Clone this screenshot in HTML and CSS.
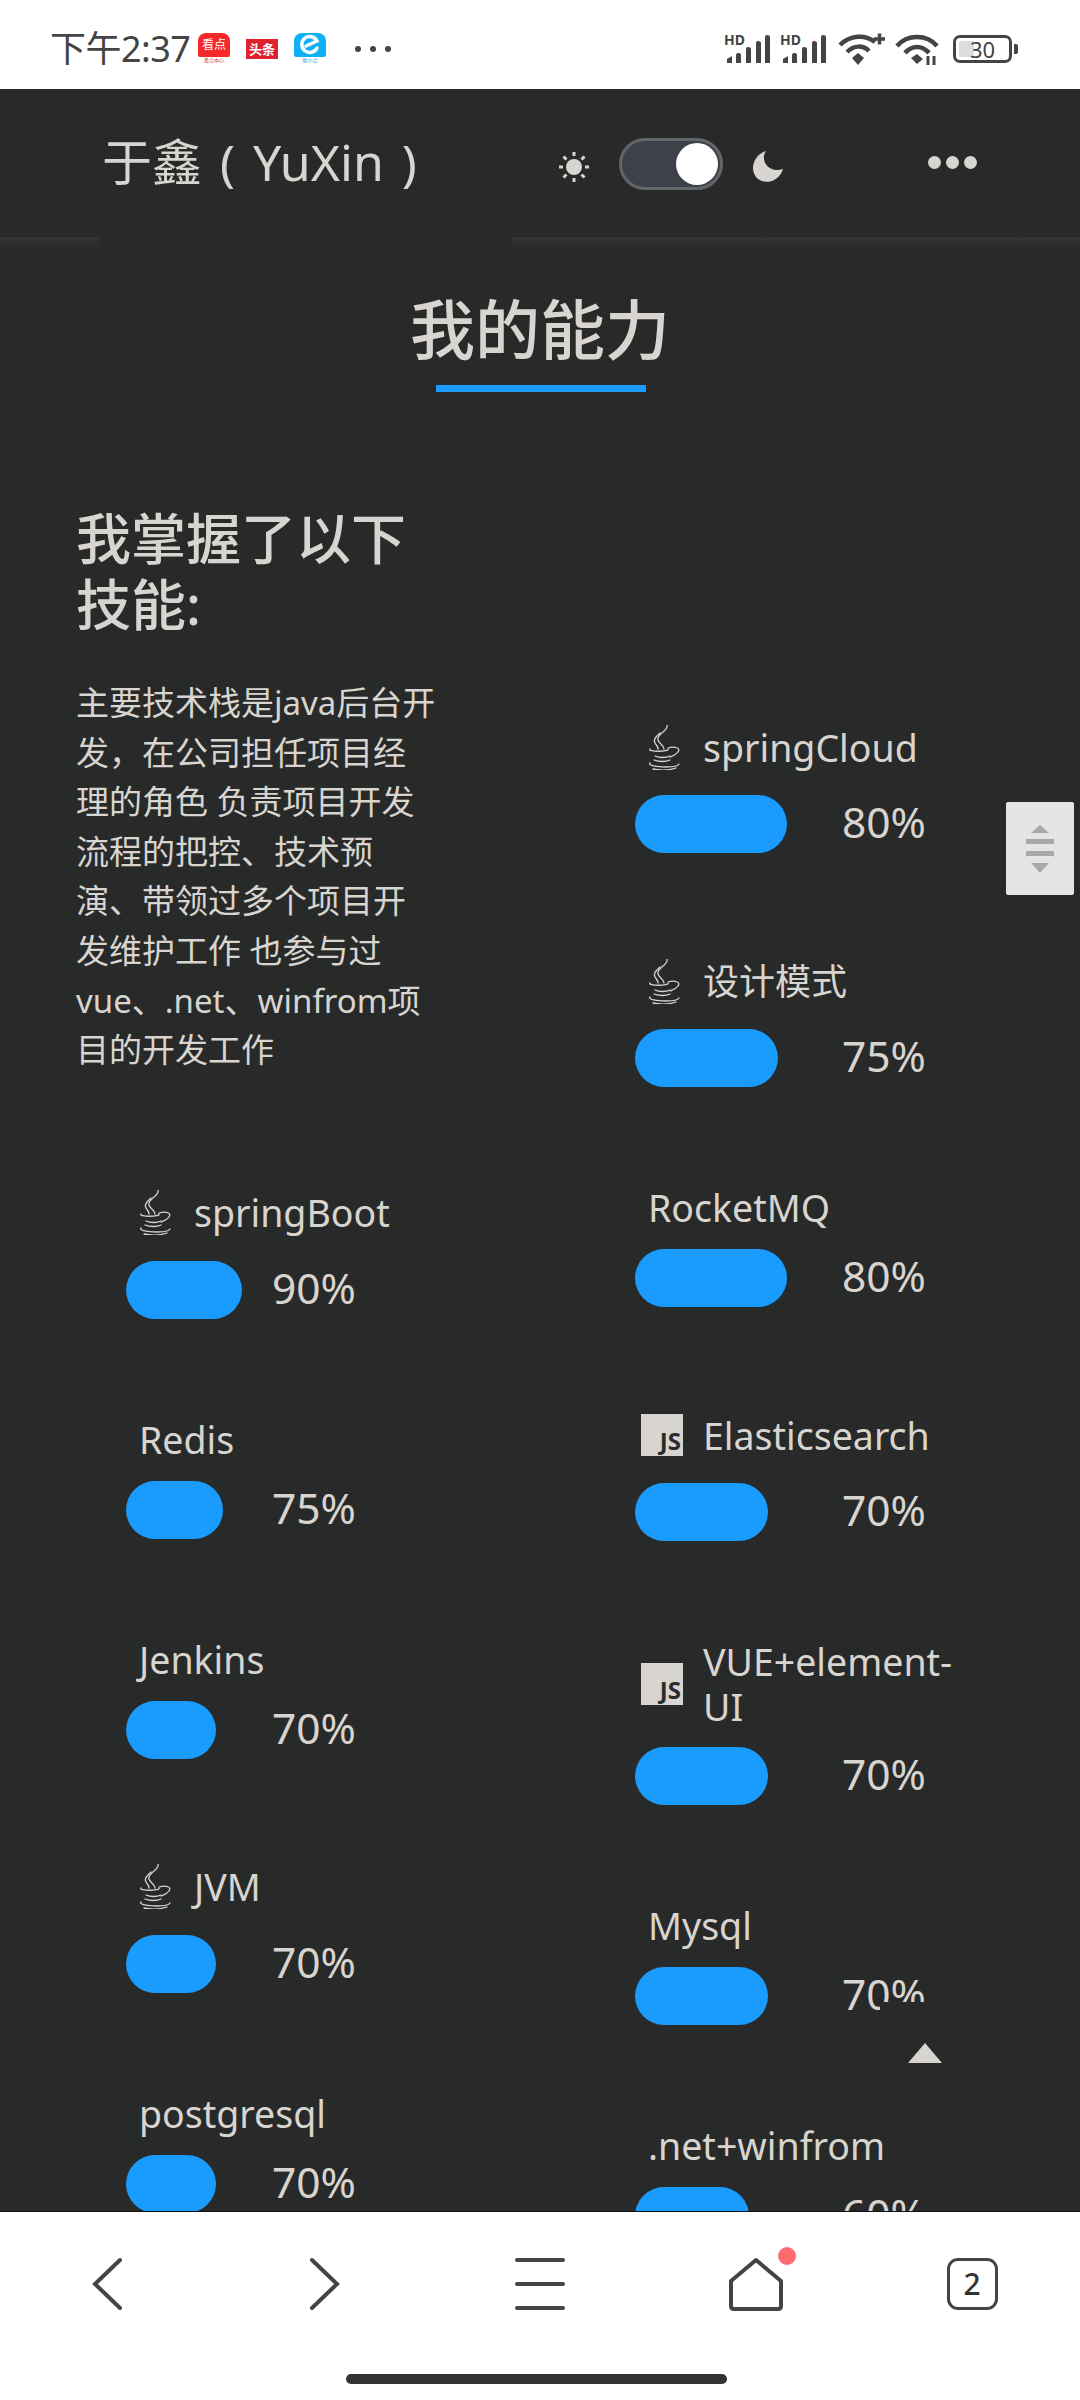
FILE: index.html
```html
<!DOCTYPE html>
<html lang="zh-CN">
<head>
<meta charset="utf-8">
<title>于鑫 ( YuXin )</title>
<link rel="stylesheet" href="styles.css">
</head>
<body>
<svg class="defs" width="0" height="0" aria-hidden="true">
  <symbol id="java" viewBox="0 0 35 45">
    <g fill="none" stroke="currentColor" stroke-width="1.3" stroke-linecap="round">
      <path d="M22 0C24 6 11 9 13 15C14 19 19 20 19 24"/>
      <path d="M15 8C11 12 8 14 10 18C11 20 13 21 13 24"/>
      <path d="M5 24C2 27 25 27 23 24"/>
      <path d="M23 23C30 21 36 23 33 27C31 30 27 31 25 32"/>
      <path d="M10 31C14 33 21 33 25 31"/>
      <path d="M9 35C14 37 21 37 25 35"/>
      <path d="M5 38C1 42 31 44 34 39"/>
      <path d="M8 44C15 45.500 25 45 31 43"/>
    </g>
  </symbol>
  <symbol id="signal" viewBox="0 0 46 32">
    <path d="M3 30V26L8 23V30Z M12 30V22Q12 20 14 20H15Q17 20 17 22V30Z M22 30V16Q22 14 24 14Q27 14 27 16V30Z M32 30V10Q32 8 34 8Q37 8 37 10V30Z M41 30V4Q41 2 43 2Q46 2 46 4V30Z" fill="#444"/>
  </symbol>
</svg>

<header class="status">
  <div class="status-left">
    <span class="time">下午2:37</span>
    <span class="app app-red"><span class="app-tile">看点</span><span class="app-sub">看点中心</span></span>
    <span class="app-flat">头条</span>
    <span class="app app-blue">
      <span class="app-tile"><svg width="24" height="24" viewBox="0 0 24 24"><path d="M19 15A8 8 0 1 1 19 8L8 13" fill="none" stroke="#fff" stroke-width="3.500" stroke-linecap="round"/></svg></span>
      <span class="app-sub">助小点</span>
    </span>
    <span class="status-dots"><i></i><i></i><i></i></span>
  </div>
  <div class="status-right">
    <svg class="sig" width="46" height="36"><use href="#signal" y="4" width="46" height="32"/><text x="0" y="16" class="hd">HD</text></svg>
    <svg class="sig" width="46" height="36"><use href="#signal" y="4" width="46" height="32"/><text x="0" y="16" class="hd">HD</text></svg>
    <svg class="wifi" width="48" height="34" viewBox="0 0 48 34">
      <g fill="none" stroke="#444" stroke-width="4.500">
        <path d="M2 13C12 3 27 2 37 10"/>
        <path d="M9 20C16 13 25 13 31 19"/>
      </g>
      <path d="M14 26L20 21L26 26L20 33Z" fill="#444"/>
      <path d="M36 7H47M41.500 1.500V12.500" stroke="#444" stroke-width="3.500"/>
    </svg>
    <svg class="wifi2" width="46" height="34" viewBox="0 0 46 34">
      <g fill="none" stroke="#444" stroke-width="4.500">
        <path d="M2 14C12 2 32 2 42 14"/>
        <path d="M10 21C17 13 27 13 34 21"/>
      </g>
      <path d="M16 26L22 22L28 27L22 32Z" fill="#444"/>
      <path d="M33 24V33M39 24V33" stroke="#444" stroke-width="3"/>
    </svg>
    <span class="battery"><span class="battery-fill"></span><span class="battery-num">30</span></span>
    <span class="battery-nub"></span>
  </div>
</header>

<main class="page">
  <div class="topbar">
    <div class="brand">于鑫 ( YuXin )</div>
    <div class="theme">
      <svg class="sun" width="32" height="32" viewBox="0 0 32 32">
        <circle cx="16" cy="16" r="8" fill="#d8d4cf"/>
        <path d="M16 1V5M16 27V31M1 16H5M27 16H31M5.500 5.500L8.500 8.500M23.500 23.500L26.500 26.500M26.500 5.500L23.500 8.500M5.500 26.500L8.500 23.500" stroke="#d8d4cf" stroke-width="3"/>
      </svg>
      <span class="toggle"><span class="knob"></span></span>
      <svg class="moon" width="32" height="32" viewBox="0 0 32 32">
        <path d="M14 0C8 8 15 23 31 18C27 31 12 35 4 26C-3 17 3 3 14 0Z" fill="#d8d4cf"/>
      </svg>
    </div>
    <div class="more"><i></i><i></i><i></i></div>
  </div>
  <div class="rule"><span class="rule-a"></span><span class="rule-b"></span></div>

  <h1 class="heading">我的能力</h1>
  <div class="underline"></div>

  <div class="columns">
    <section class="col col-left">
      <h2 class="intro-title">我掌握了以下<br>技能:</h2>
      <p class="intro">主要技术栈是java后台开<br>发，在公司担任项目经<br>理的角色 负责项目开发<br>流程的把控、技术预<br>演、带领过多个项目开<br>发维护工作 也参与过<br>vue、.net、winfrom项<br>目的开发工作</p>

      <div class="skill first-left">
        <div class="title iconed"><svg class="java"><use href="#java"/></svg><span>springBoot</span></div>
        <div class="row"><div class="track"><div class="bar" style="width:90%"></div></div><span class="pct">90%</span></div>
      </div>
      <div class="skill">
        <div class="title"><span>Redis</span></div>
        <div class="row"><div class="track"><div class="bar" style="width:75%"></div></div><span class="pct">75%</span></div>
      </div>
      <div class="skill">
        <div class="title"><span>Jenkins</span></div>
        <div class="row"><div class="track"><div class="bar" style="width:70%"></div></div><span class="pct">70%</span></div>
      </div>
      <div class="skill">
        <div class="title iconed"><svg class="java"><use href="#java"/></svg><span>JVM</span></div>
        <div class="row"><div class="track"><div class="bar" style="width:70%"></div></div><span class="pct">70%</span></div>
      </div>
      <div class="skill">
        <div class="title"><span>postgresql</span></div>
        <div class="row"><div class="track"><div class="bar" style="width:70%"></div></div><span class="pct">70%</span></div>
      </div>
    </section>

    <section class="col col-right">
      <div class="skill">
        <div class="title iconed"><svg class="java"><use href="#java"/></svg><span>springCloud</span></div>
        <div class="row"><div class="track"><div class="bar" style="width:80%"></div></div><span class="pct">80%</span></div>
      </div>
      <div class="skill">
        <div class="title iconed"><svg class="java"><use href="#java"/></svg><span class="cjk">设计模式</span></div>
        <div class="row"><div class="track"><div class="bar" style="width:75%"></div></div><span class="pct">75%</span></div>
      </div>
      <div class="skill">
        <div class="title"><span>RocketMQ</span></div>
        <div class="row"><div class="track"><div class="bar" style="width:80%"></div></div><span class="pct">80%</span></div>
      </div>
      <div class="skill">
        <div class="title iconed"><span class="js">JS</span><span>Elasticsearch</span></div>
        <div class="row"><div class="track"><div class="bar" style="width:70%"></div></div><span class="pct">70%</span></div>
      </div>
      <div class="skill">
        <div class="title iconed"><span class="js">JS</span><span>VUE+element-UI</span></div>
        <div class="row"><div class="track"><div class="bar" style="width:70%"></div></div><span class="pct">70%</span></div>
      </div>
      <div class="skill">
        <div class="title"><span>Mysql</span></div>
        <div class="row"><div class="track"><div class="bar" style="width:70%"></div></div><span class="pct">70%</span></div>
      </div>
      <div class="skill">
        <div class="title"><span>.net+winfrom</span></div>
        <div class="row"><div class="track"><div class="bar" style="width:60%"></div></div><span class="pct">60%</span></div>
      </div>
    </section>
  </div>

  <div class="scroll-handle">
    <svg width="30" height="48" viewBox="0 0 30 48">
      <path d="M15 0L24 8H6Z M15 48L6 38H24Z" fill="#a8a9a9"/>
      <path d="M1 14H29V19H1Z M1 26H29V31H1Z" fill="#a8a9a9"/>
    </svg>
  </div>
  <div class="back-top"><span class="arrow"></span></div>
</main>

<nav class="navbar">
  <div class="nav-icons">
    <svg class="nav-icon" width="52" height="56" viewBox="0 0 52 56"><path d="M38 4L13 28L38 52" fill="none" stroke="#444" stroke-width="4" stroke-linecap="round"/></svg>
    <svg class="nav-icon" width="52" height="56" viewBox="0 0 52 56"><path d="M14 4L39 28L14 52" fill="none" stroke="#444" stroke-width="4" stroke-linecap="round"/></svg>
    <svg class="nav-icon" width="52" height="56" viewBox="0 0 52 56"><path d="M3 4H49M3 28H49M3 52H49" stroke="#444" stroke-width="4" stroke-linecap="round"/></svg>
    <span class="home">
      <svg class="nav-icon" width="56" height="56" viewBox="0 0 56 56"><path d="M28 4L53 25V50Q53 53 50 53H6Q3 53 3 50V25Z" fill="none" stroke="#444" stroke-width="4" stroke-linejoin="round"/></svg>
      <span class="red-dot"></span>
    </span>
    <span class="tabs">2</span>
  </div>
  <div class="home-bar"></div>
</nav>
</body>
</html>
```

FILE: styles.css
```css
* { box-sizing: border-box; }
html, body { margin: 0; padding: 0; }
body {
  width: 1080px;
  height: 2400px;
  display: flex;
  flex-direction: column;
  overflow: hidden;
  background: #fff;
  font-family: "Noto Sans", "Noto Sans CJK SC", sans-serif;
}
.defs { position: absolute; }

/* status bar */
.status {
  height: 89px;
  flex: none;
  display: flex;
  justify-content: space-between;
  align-items: center;
  padding: 8px 62px 0 50px;
  background: #fff;
  color: #444;
}
.status-left, .status-right { display: flex; align-items: center; }
.time { font-size: 36px; line-height: 40px; width: 148px; white-space: nowrap; letter-spacing: -.5px; }
.app { display: flex; flex-direction: column; align-items: center; width: 32px; height: 32px; }
.app-tile {
  width: 32px; height: 24px;
  border-radius: 8px 8px 2px 2px;
  display: flex; align-items: center; justify-content: center;
  color: #fff;
  font-size: 12px;
  line-height: 24px;
}
.app-sub { font-size: 5px; line-height: 7px; white-space: nowrap; }
.app-red .app-tile { background: #f42a2a; }
.app-red .app-sub { color: #c44; }
.app-blue { margin-left: 16px; }
.app-blue .app-tile { background: #0fb0f5; }
.app-blue .app-sub { color: #0a9fe0; }
.app-flat {
  width: 32px; height: 20px; margin-left: 16px;
  background: #e0222e; color: #fff;
  font-size: 13px; line-height: 20px; text-align: center; font-weight: 700;
}
.status-dots { display: flex; gap: 9px; margin-left: 29px; }
.status-dots i { width: 6px; height: 6px; border-radius: 50%; background: #444; }
.sig { margin-right: 10px; margin-top: -4px; }
.hd { font: 700 14px "Noto Sans", sans-serif; fill: #444; }
.wifi { margin-left: 2px; margin-right: 9px; }
.wifi2 { margin-right: 12px; }
.battery {
  position: relative;
  width: 59px; height: 28px;
  border: 3px solid #444;
  border-radius: 7px;
  padding: 3px;
  display: flex;
}
.battery-fill { width: 15px; background: #ddd; border-radius: 2px 0 0 2px; }
.battery-num {
  position: absolute; left: 0; right: 0; top: 0; bottom: 0;
  text-align: center;
  font-size: 22px; line-height: 22px; color: #444;
}
.battery-nub { width: 4px; height: 10px; margin-left: 2px; background: #444; border-radius: 0 2px 2px 0; }

/* page */
.page {
  position: relative;
  flex: 1;
  min-height: 0;
  overflow: hidden;
  background: #282a2a;
  color: #d8d4cf;
}
.topbar { height: 148px; display: flex; align-items: center; }
.brand { font-size: 50px; line-height: 60px; margin-left: 102px; width: 456px; word-spacing: 5px; white-space: nowrap; margin-top: -2px; }
.theme { display: flex; align-items: center; width: 226px; margin-top: 1px; }
.toggle {
  width: 105px; height: 52px;
  margin: 0 29px;
  border-radius: 26px;
  border: 3px solid #62656a;
  background: #3e414a;
  display: flex; align-items: center; justify-content: flex-end;
  padding-right: 2px;
}
.knob { width: 42px; height: 42px; border-radius: 50%; background: #fff; }
.sun, .moon { margin-top: 6px; flex: none; }
.more { display: flex; gap: 5px; margin-left: 144px; margin-top: -2px; }
.more i { width: 13px; height: 13px; border-radius: 50%; background: #d8d4cf; }
.rule { height: 12px; display: flex; justify-content: space-between; }
.rule-a, .rule-b { height: 12px; background: linear-gradient(#333535, #2a2c2c); }
.rule-a { width: 100px; }
.rule-b { width: 568px; }

.heading {
  margin: 40px 0 0;
  font-size: 65px;
  line-height: 80px;
  font-weight: 500;
  text-align: center;
}
.underline { width: 210px; height: 7px; margin: 16px 0 0 436px; background: #1a9cff; }

.columns { display: grid; grid-template-columns: 540px 540px; }
.col-left { padding: 113px 0 0 76px; }
.col-right { padding-top: 325px; padding-left: 95px; }
.intro-title { margin: 0; font-size: 55px; line-height: 66px; font-weight: 500; white-space: nowrap; }
.intro { margin: 41px 0 0; font-size: 33px; line-height: 49.600px; white-space: nowrap; }
.first-left { margin-top: 108px; }
.col-left .skill { margin-left: 50px; }

.skill { margin-bottom: 98px; }
.title {
  display: flex; align-items: center;
  width: 340px;
  min-height: 45px;
  padding-left: 13px;
  font-size: 37.500px;
  line-height: 45px;
  margin-bottom: 19px;
}
.iconed { min-height: 60px; padding-left: 6px; margin-bottom: 18px; gap: 20px; }
.cjk { font-size: 36px; }
.java { width: 35px; height: 45px; margin-left: 4px; margin-right: 3px; flex: none; color: #d8d4cf; }
.js {
  width: 42px; height: 42px; flex: none;
  background: #d8d4cf; color: #2a2c2c;
  display: flex; align-items: flex-end; justify-content: flex-end;
  padding: 0 2px 2px 0;
  font-size: 24px; line-height: 26px; font-weight: 700;
}
.row { display: flex; align-items: center; height: 58px; }
.track { height: 58px; flex: none; }
.col-left .track { width: 129px; }
.col-right .track { width: 190px; }
.bar { height: 58px; border-radius: 29px; background: #1a9cff; }
.pct { font-size: 42.500px; line-height: 58px; margin-left: 17px; margin-top: -4px; }

/* overlays */
.scroll-handle {
  position: absolute;
  left: 1006px; top: 713px;
  width: 68px; height: 93px;
  background: #e4e5e5;
  border-radius: 2px;
  display: flex; align-items: center; justify-content: center;
}
.back-top {
  position: absolute;
  left: 880px; top: 1913px;
  width: 90px; height: 90px;
  background: #282a2a;
  display: flex; justify-content: center;
  padding-top: 41px;
}
.arrow {
  width: 0; height: 0;
  border-left: 17px solid transparent;
  border-right: 17px solid transparent;
  border-bottom: 20px solid #d8d4cf;
}

/* bottom nav */
.navbar {
  height: 189px;
  flex: none;
  background: #fff;
  border-top: 1px solid #111;
  position: relative;
}
.nav-icons {
  display: grid;
  grid-template-columns: repeat(5, 216px);
  justify-items: center;
  align-items: center;
  padding-top: 44px;
}
.home { position: relative; display: flex; }
.red-dot {
  position: absolute;
  right: -12px; top: -9px;
  width: 18px; height: 18px;
  border-radius: 50%;
  background: #ff6b6f;
}
.tabs {
  width: 51px; height: 52px;
  border: 3px solid #444;
  border-radius: 11px;
  color: #333;
  font-size: 30px; line-height: 46px; font-weight: 500;
  text-align: center;
}
.home-bar {
  position: absolute;
  left: 346px; top: 162px;
  width: 381px; height: 10px;
  border-radius: 5px;
  background: #333;
}
```
